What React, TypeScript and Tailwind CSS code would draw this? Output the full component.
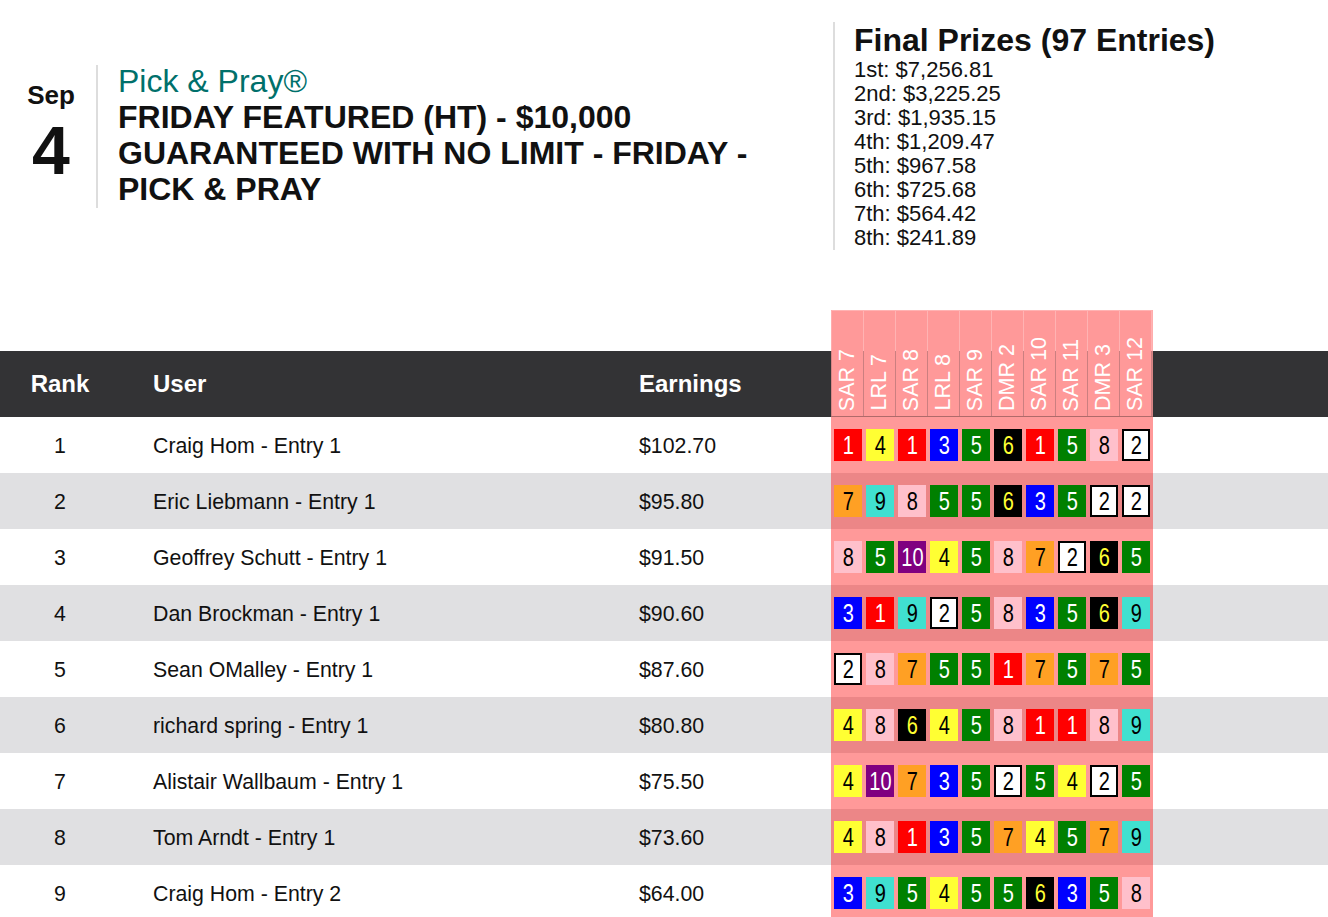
import React from "react";

const races = ["SAR 7", "LRL 7", "SAR 8", "LRL 8", "SAR 9", "DMR 2", "SAR 10", "SAR 11", "DMR 3", "SAR 12"];

const prizes = [
  "1st: $7,256.81",
  "2nd: $3,225.25",
  "3rd: $1,935.15",
  "4th: $1,209.47",
  "5th: $967.58",
  "6th: $725.68",
  "7th: $564.42",
  "8th: $241.89",
];

const rows: { rank: number; user: string; earn: string; picks: number[] }[] = [
  { rank: 1, user: "Craig Hom - Entry 1", earn: "$102.70", picks: [1, 4, 1, 3, 5, 6, 1, 5, 8, 2] },
  { rank: 2, user: "Eric Liebmann - Entry 1", earn: "$95.80", picks: [7, 9, 8, 5, 5, 6, 3, 5, 2, 2] },
  { rank: 3, user: "Geoffrey Schutt - Entry 1", earn: "$91.50", picks: [8, 5, 10, 4, 5, 8, 7, 2, 6, 5] },
  { rank: 4, user: "Dan Brockman - Entry 1", earn: "$90.60", picks: [3, 1, 9, 2, 5, 8, 3, 5, 6, 9] },
  { rank: 5, user: "Sean OMalley - Entry 1", earn: "$87.60", picks: [2, 8, 7, 5, 5, 1, 7, 5, 7, 5] },
  { rank: 6, user: "richard spring - Entry 1", earn: "$80.80", picks: [4, 8, 6, 4, 5, 8, 1, 1, 8, 9] },
  { rank: 7, user: "Alistair Wallbaum - Entry 1", earn: "$75.50", picks: [4, 10, 7, 3, 5, 2, 5, 4, 2, 5] },
  { rank: 8, user: "Tom Arndt - Entry 1", earn: "$73.60", picks: [4, 8, 1, 3, 5, 7, 4, 5, 7, 9] },
  { rank: 9, user: "Craig Hom - Entry 2", earn: "$64.00", picks: [3, 9, 5, 4, 5, 5, 6, 3, 5, 8] },
];

const boxStyles: Record<number, string> = {
  1: "bg-[#ff0000] text-white",
  2: "bg-white text-black border-2 border-black",
  3: "bg-[#0000ff] text-white",
  4: "bg-[#ffff33] text-black",
  5: "bg-[#008000] text-white",
  6: "bg-black text-[#ffff33]",
  7: "bg-[#ffa024] text-black",
  8: "bg-[#ffc0cb] text-black",
  9: "bg-[#40e0d0] text-black",
  10: "bg-[#800080] text-white",
};

function Box({ n }: { n: number }) {
  return (
    <div className={`box-border flex h-[32px] w-[28px] items-center justify-center ${boxStyles[n]}`}>
      <span className="inline-block scale-x-[0.77] text-[26px] leading-none">{n}</span>
    </div>
  );
}

export default function App() {
  return (
    <div className="w-[1328px] bg-white font-['Liberation_Sans',Arial,sans-serif] text-[#111]">
      {/* Top section */}
      <div className="flex h-[310px] items-start pt-[22px]">
        <div className="flex h-[228px] w-[833px] items-center">
          <div className="flex h-[144px] items-stretch">
            <div className="ml-[6px] flex w-[90px] flex-col items-center pt-[17px] font-bold">
              <div className="text-[26px] leading-[28px]">Sep</div>
              <div className="mt-[7px] text-[68px] leading-[68px]">4</div>
            </div>
            <div className="mt-[1px] w-[2px] bg-[#dddddd]" />
            <div className="-mt-[1px] w-[660px] pl-[20px]">
              <div className="text-[32px] leading-[36px] text-[#00706b]">Pick &amp; Pray®</div>
              <div className="text-[32px] font-bold leading-[36px]">
                FRIDAY FEATURED (HT) - $10,000 GUARANTEED WITH NO LIMIT - FRIDAY - PICK &amp; PRAY
              </div>
            </div>
          </div>
        </div>
        <div className="h-[228px] border-l-2 border-[#dddddd] pl-[19px]">
          <div className="text-[32px] font-bold leading-[36px]">Final Prizes (97 Entries)</div>
          {prizes.map((p) => (
            <div key={p} className="text-[22px] leading-[24px]">
              {p}
            </div>
          ))}
        </div>
      </div>

      {/* Table header */}
      <div className="flex items-end">
        <div className="flex h-[66px] w-[831px] items-center bg-[#333335] text-[24px] font-bold text-white">
          <div className="w-[120px] text-center">Rank</div>
          <div className="w-[486px] pl-[33px]">User</div>
          <div className="w-[225px] pl-[33px]">Earnings</div>
        </div>
        <div className="flex h-[107px] w-[322px] border-b border-[#b06a6a] bg-[linear-gradient(to_bottom,#ffffff_41px,#333335_41px)]">
          <div className="w-[1px] bg-[rgba(255,153,153,0.8)]" />
          {races.map((r) => (
            <div
              key={r}
              className="flex w-[32px] flex-col items-center justify-end border-r border-t border-[rgba(255,153,153,0.75)] bg-[#ff9999] bg-clip-padding pb-[5px]"
            >
              <span className="rotate-180 text-[21.5px] leading-none whitespace-nowrap text-white [writing-mode:vertical-rl]">
                {r}
              </span>
            </div>
          ))}
          <div className="w-[1px] bg-[rgba(255,153,153,0.8)]" />
        </div>
        <div className="h-[66px] flex-1 bg-[#333335]" />
      </div>

      {/* Rows */}
      {rows.map((row, i) => (
        <div key={row.rank} className={`flex h-[56px] items-center text-[21.3px] ${i % 2 === 1 ? "bg-[#e0e0e2]" : "bg-white"}`}>
          <div className="mt-[3px] w-[120px] text-center">{row.rank}</div>
          <div className="mt-[3px] w-[486px] pl-[33px]">{row.user}</div>
          <div className="mt-[3px] w-[225px] pl-[33px]">{row.earn}</div>
          <div className="flex h-full w-[322px] items-center bg-[rgba(255,0,0,0.4)] px-[1px]">
            {row.picks.map((n, j) => (
              <div key={j} className="flex w-[32px] justify-center">
                <Box n={n} />
              </div>
            ))}
          </div>
        </div>
      ))}
    </div>
  );
}
